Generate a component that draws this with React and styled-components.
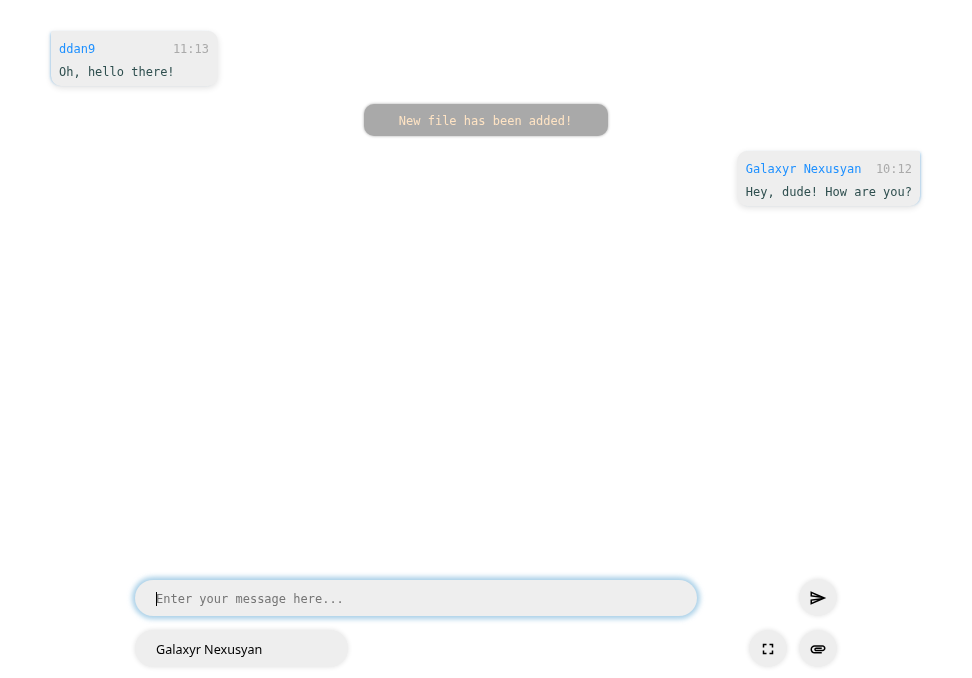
import React from 'react'
import styled, { createGlobalStyle } from 'styled-components'

const GlobalStyle = createGlobalStyle`
  html, body { margin: 0; padding: 0; background: #fff; }
  * { box-sizing: border-box; }
`

const Page = styled.div`
  height: 678px;
  display: flex;
  flex-direction: column;
  font-family: "DejaVu Sans Mono", monospace;
  font-size: 12px;
  will-change: opacity;
`

const Messages = styled.div`
  flex: 1;
  display: flex;
  flex-direction: column;
  gap: 18px;
  padding: 31px 52px 0 51px;
`

const Bubble = styled.div`
  align-self: ${props => (props.$mine ? 'flex-end' : 'flex-start')};
  min-width: 167px;
  padding: ${props => (props.$mine ? '9px 8px 5px 9px' : '9px 9px 5px 8px')};
  background: #eee;
  border-radius: ${props => (props.$mine ? '10px 2px 10px 10px' : '2px 10px 10px 10px')};
  box-shadow: 0 2px 6px rgba(0, 0, 0, 0.12),
    ${props => (props.$mine ? '2px' : '-2px')} 0 3px -2px rgba(90, 175, 240, 0.85);
`

const BubbleHead = styled.div`
  display: flex;
  justify-content: space-between;
  gap: 13.5px;
  line-height: 18px;
  margin-bottom: 5px;
`

const Author = styled.span`
  color: #1e90ff;
`

const Time = styled.span`
  color: #aaa;
`

const Body = styled.div`
  color: #2f4f4f;
  line-height: 18px;
`

const Notice = styled.div`
  align-self: center;
  width: 244px;
  height: 32px;
  line-height: 34px;
  margin-bottom: -3px;
  text-align: center;
  color: #ffe4c4;
  background: #a9a9a9;
  border-radius: 10px;
  box-shadow: 0 0 3px rgba(0, 0, 0, 0.35);
`

const Composer = styled.div`
  display: flex;
  flex-direction: column;
  gap: 14px;
  padding: 0 135px 11px;
`

const Row = styled.div`
  display: flex;
  align-items: flex-end;
  justify-content: space-between;
`

const Actions = styled.div`
  display: flex;
  gap: 12px;
`

const MessageField = styled.div`
  position: relative;
`

const Caret = styled.span`
  position: absolute;
  left: 21px;
  top: 12px;
  width: 1px;
  height: 14px;
  background: #000;
`

const MessageInput = styled.input`
  display: block;
  width: 562px;
  height: 36px;
  padding: 2px 21px 0;
  border: 0;
  outline: 0;
  border-radius: 18px;
  background: #eee;
  color: #2f4f4f;
  font: 12px "DejaVu Sans Mono", monospace;
  box-shadow: 0 0 5px 3px rgba(110, 175, 215, 0.6);
  &::placeholder { color: #757575; }
`

const NameInput = styled.input`
  width: 213px;
  height: 37px;
  padding: 2px 21px 0;
  border: 0;
  outline: 0;
  border-radius: 18px;
  background: #eee;
  color: #000;
  font: 12.6px "Noto Sans", sans-serif;
  box-shadow: 0 0 5px rgba(0, 0, 0, 0.12);
`

const RoundButton = styled.button`
  width: 38px;
  height: 37px;
  padding: 0;
  border: 0;
  border-radius: 50%;
  display: flex;
  align-items: center;
  justify-content: center;
  background: #eee;
  color: #000;
  box-shadow: 0 0 5px rgba(0, 0, 0, 0.12);
`

const SendIcon = () => (
  <svg width="18" height="18" viewBox="0 0 24 24" fill="currentColor">
    <path d="M4.01 6.03l7.51 3.22-7.52-1 .01-2.22m7.5 8.72L4 17.97v-2.22l7.51-1M2.01 3L2 10l15 2-15 2 .01 7L23 12 2.01 3z" />
  </svg>
)

const FullscreenIcon = () => (
  <svg width="18" height="18" viewBox="0 0 24 24" fill="currentColor">
    <path d="M7 14H5v5h5v-2H7v-3zm-2-4h2V7h3V5H5v5zm12 7h-3v2h5v-5h-2v3zM14 5v2h3v3h2V5h-5z" />
  </svg>
)

const AttachIcon = () => (
  <svg width="18" height="18" viewBox="0 0 24 24" fill="currentColor">
    <path d="M2 12.5C2 9.46 4.46 7 7.5 7H18c2.21 0 4 1.79 4 4s-1.79 4-4 4H9.5C8.12 15 7 13.88 7 12.5S8.12 10 9.5 10H17v2H9.41c-.55 0-.55 1 0 1H18c1.1 0 2-.9 2-2s-.9-2-2-2H7.5C5.57 9 4 10.57 4 12.5S5.57 16 7.5 16H17v2H7.5C4.46 18 2 15.54 2 12.5z" />
  </svg>
)

export default function App() {
  return (
    <Page>
      <GlobalStyle />
      <Messages>
        <Bubble>
          <BubbleHead>
            <Author>ddan9</Author>
            <Time>11:13</Time>
          </BubbleHead>
          <Body>Oh, hello there!</Body>
        </Bubble>
        <Notice>New file has been added!</Notice>
        <Bubble $mine>
          <BubbleHead>
            <Author>Galaxyr Nexusyan</Author>
            <Time>10:12</Time>
          </BubbleHead>
          <Body>Hey, dude! How are you?</Body>
        </Bubble>
      </Messages>
      <Composer>
        <Row>
          <MessageField>
            <MessageInput autoFocus placeholder="Enter your message here..." />
            <Caret />
          </MessageField>
          <RoundButton><SendIcon /></RoundButton>
        </Row>
        <Row>
          <NameInput defaultValue="Galaxyr Nexusyan" />
          <Actions>
            <RoundButton><FullscreenIcon /></RoundButton>
            <RoundButton><AttachIcon /></RoundButton>
          </Actions>
        </Row>
      </Composer>
    </Page>
  )
}
